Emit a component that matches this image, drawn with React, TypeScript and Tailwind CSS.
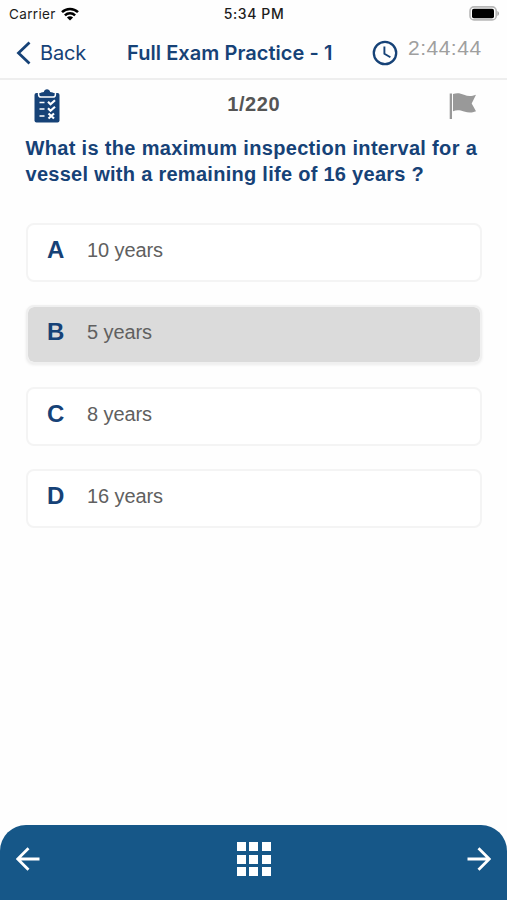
import React from 'react'

const OPTIONS = [
  { id: "A", text: "10 years" },
  { id: "B", text: "5 years" },
  { id: "C", text: "8 years" },
  { id: "D", text: "16 years" },
];

const SELECTED_ID = "B";

const StatusBar = () => (
  <div className="grid h-[27px] grid-cols-3 items-center pl-[9px] pr-[8px] font-['Inter',sans-serif] text-[13.5px] text-[#1c1c1c]">
    <div className="flex items-center gap-[6px]">
      <span className="pt-px tracking-[0.35px]">Carrier</span>
      <svg className="-ml-px" width="18" height="14" viewBox="0 0 18 14" fill="none" stroke="#000" strokeWidth="2.5">
        <path d="M1 5.2C5.4.8 12.6.8 17 5.2" />
        <path d="M3.9 8.3c2.9-2.8 7.3-2.8 10.2 0" />
        <path d="M9 13.6 5.9 10.5c1.8-1.7 4.4-1.7 6.2 0Z" fill="#000" stroke="none" />
      </svg>
    </div>
    <span className="text-center text-[14px] font-medium tracking-[0.6px]">5:34 PM</span>
    <svg className="justify-self-end" width="30" height="15" viewBox="0 0 30 15">
      <rect x="1" y="0.9" width="26.2" height="13" rx="4" fill="#fff" stroke="#b8b8b8" strokeWidth="1.6" />
      <rect x="3" y="2.8" width="22" height="9.4" rx="1.8" fill="#000" />
      <path d="M28.4 5v5c1-.4 1.6-1.4 1.6-2.5S29.4 5.4 28.4 5Z" fill="#a5a5a5" />
    </svg>
  </div>
)

const NavBar = () => (
  <header className="flex h-[53px] items-center border-b-2 border-[#eeeeee] pl-[16px] font-['Inter',sans-serif] text-[#164277]">
    <button type="button" className="flex w-[111px] items-center gap-[9px]">
      <svg width="15" height="24" viewBox="0 0 15 24" fill="none" stroke="currentColor" strokeWidth="2.8">
        <path d="M13.5 1.5 2.5 12l11 10.500" />
      </svg>
      <span className="text-[20px] tracking-[-0.15px]">Back</span>
    </button>
    <h1 className="w-[245px] whitespace-nowrap text-[20px] font-semibold tracking-[0.06px]">Full Exam Practice - 1</h1>
    <svg width="26" height="26" viewBox="0 0 26 26" fill="none" stroke="currentColor" strokeWidth="2.3">
      <circle cx="13" cy="13" r="11.2" />
      <path d="M12.4 6.5v7.300l6 3.500" strokeWidth="1.9" />
    </svg>
    <span className="mb-[9px] ml-[10px] font-['Liberation_Sans',sans-serif] text-[21px] leading-[24px] tracking-[0.5px] text-[#9f9f9f]">2:44:44</span>
  </header>
)

const ClipboardIcon = () => (
  <svg width="26" height="34" viewBox="0 0 26 34" fill="none">
    <rect x="0.5" y="4" width="25" height="29.5" rx="2" fill="#164277" />
    <path d="M4.600 3.500v2c0 1.600.9 2.600 2.500 2.600h11.800c1.600 0 2.500-1 2.500-2.600v-2" stroke="#fff" strokeWidth="1.5" />
    <path d="M6 6.200V5c0-.8.5-1.300 1.300-1.500l2.500-.5C10.300 1.200 11.400.3 13 .3s2.700.9 3.200 2.700l2.500.5c.8.2 1.300.7 1.300 1.500v1.200Z" fill="#164277" />
    <path d="M5.500 13.500h5M5.500 20h5M5.500 27h5" stroke="#fff" strokeWidth="1.6" />
    <path d="m14 12.800 2.500 2.400 4.500-4M14 19.300l2.500 2.400 4.500-4M14.500 24.500l5.500 5M20 24.500l-5.500 5" stroke="#fff" strokeWidth="2.2" />
  </svg>
)

const FlagIcon = () => (
  <svg width="28" height="27" viewBox="0 0 28 27" fill="#999">
    <path d="M0.700 0.500h2.300v25.500H0.700Z" />
    <path d="M4 1c4-1.500 7.500-.8 11 .8 4 1.600 7.500 1.600 12-.1l-4.300 8.800L27 18.200c-4.500 2-8 1.500-12 .3-4-1.300-7-1.800-11-.3Z" />
  </svg>
)

const ArrowIcon = ({ className = "" }) => (
  <svg className={className} width="24" height="24" viewBox="0 0 24 24" fill="none" stroke="#fff" strokeWidth="2.8">
    <path d="M0.500 12h21.500M11.500 1.200 22.300 12 11.500 22.800" />
  </svg>
)

const App = () => {
  return (
    <div className="flex h-[900px] w-full flex-col bg-[#fefefe] font-['Liberation_Sans',sans-serif]">
      <StatusBar />
      <NavBar />

      <main className="flex-1 pr-[25px] pl-[25.5px]">
        <div className="grid h-[55px] grid-cols-3 pt-[9px]">
          <div className="pl-[8px]">
            <ClipboardIcon />
          </div>
          <p className="pt-[3px] text-center text-[20px] leading-[24px] font-bold tracking-[0.6px] text-[#555]">1/220</p>
          <div className="justify-self-end pt-[4px] pr-[5px]">
            <FlagIcon />
          </div>
        </div>

        <h2 className="whitespace-nowrap text-[20px] leading-[26px] font-bold tracking-[0.33px] text-[#164277]">
          What is the maximum inspection interval for a
          <br />
          <span className="tracking-[0.28px]">vessel with a remaining life of 16 years ?</span>
        </h2>

        <div className="mt-[36px] flex flex-col gap-[23px]">
          {OPTIONS.map((option) => (
            <button
              key={option.id}
              type="button"
              className={`flex h-[59px] items-center rounded-lg border-2 pb-[5px] pl-[19.5px] text-left ${
                option.id === SELECTED_ID
                  ? "border-[#f0f0f0] bg-[#dbdbdb] bg-clip-padding shadow-[0_1px_3px_rgba(0,0,0,0.08)]"
                  : "border-[#f4f4f4] bg-white"
              }`}
            >
              <span className="w-[40px] text-[24px] font-bold text-[#164277]">{option.id}</span>
              <span className="text-[20px] tracking-[-0.1px] text-[#606060]">{option.text}</span>
            </button>
          ))}
        </div>
      </main>

      <footer className="flex h-[75px] items-center justify-between rounded-t-[26px] bg-[#165788] px-[16px] pb-[7px]">
        <button type="button" aria-label="Previous">
          <ArrowIcon className="rotate-180" />
        </button>
        <div className="grid grid-cols-3 gap-[3.5px]">
          {Array.from({ length: 9 }, (_, i) => (
            <span key={i} className="h-[9px] w-[9px] bg-white" />
          ))}
        </div>
        <button type="button" aria-label="Next">
          <ArrowIcon />
        </button>
      </footer>
    </div>
  )
}

export default App
